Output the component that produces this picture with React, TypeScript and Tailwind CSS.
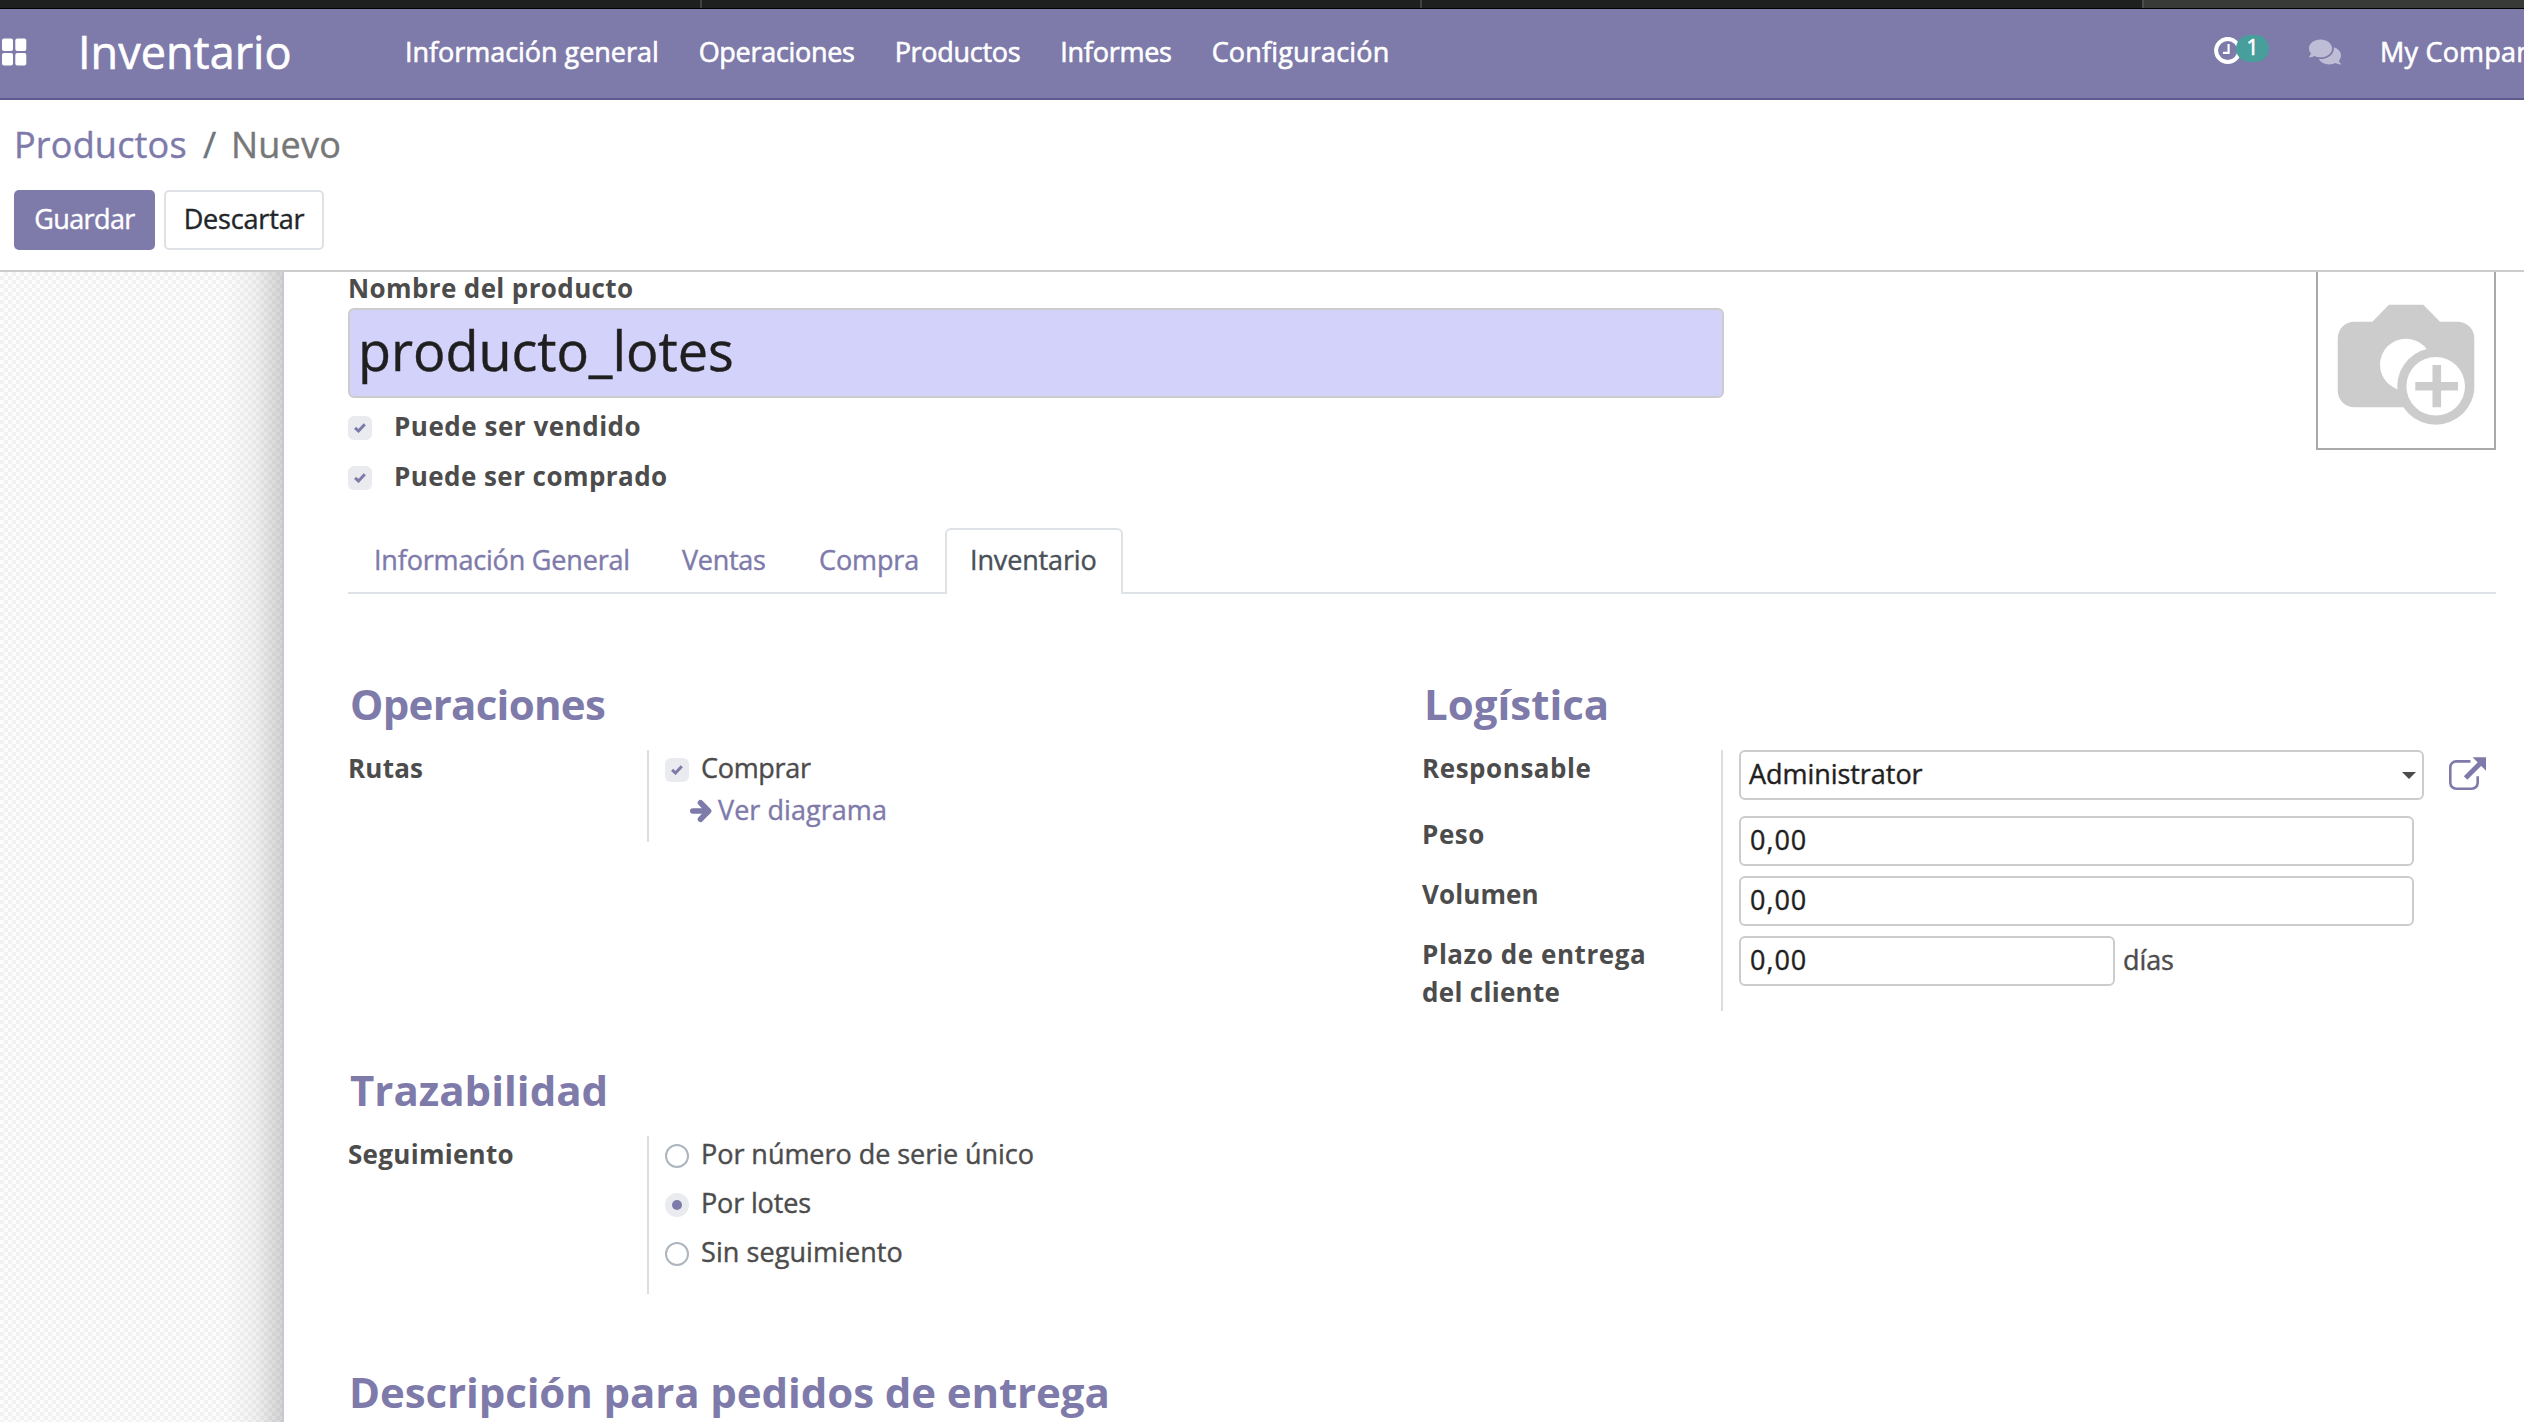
import React from 'react';
import { FaComments } from 'react-icons/fa';

function Checkbox() {
  return (
    <span className="flex size-6 shrink-0 items-center justify-center rounded-[6px] bg-[#e9ebef]">
      <svg width="12" height="10" viewBox="0 0 12 10" fill="none" stroke="#7e7aaa" strokeWidth="3">
        <path d="M1.1 4.9 4.5 8 10.8 1.3" />
      </svg>
    </span>
  );
}

function Radio({ checked = false }: { checked?: boolean }) {
  return checked ? (
    <span className="mt-2 flex size-6 shrink-0 items-center justify-center rounded-full bg-[#e9ebef]">
      <span className="size-[10px] rounded-full bg-[#7e7aaa]" />
    </span>
  ) : (
    <span className="mt-2 size-6 shrink-0 rounded-full border-2 border-[#adb5bd] bg-white" />
  );
}

function Heading({ children, className = '' }: { children: React.ReactNode; className?: string }) {
  return (
    <h2 className={`text-[42px] leading-[44px] font-bold whitespace-nowrap text-[#7e7aaa] [-webkit-text-stroke:0] ${className}`}>
      {children}
    </h2>
  );
}

function Label({ children, className = '' }: { children: React.ReactNode; className?: string }) {
  return (
    <div className={`text-[26px] font-bold whitespace-nowrap text-[#4c4c4c] [-webkit-text-stroke:0] ${className}`}>{children}</div>
  );
}

function Field({ value, className = '' }: { value: string; className?: string }) {
  return (
    <div className={`flex h-[50px] items-center rounded-[6px] border-2 border-[#ccc] bg-white pb-px pl-[9px] text-[#1f1f1f] ${className}`}>
      {value}
    </div>
  );
}

function TopBar() {
  return (
    <header>
      <div className="flex h-2 bg-[#1e201f]">
        <div className="w-[702px] border-r-2 border-[#3f4241]" />
        <div className="w-[720px] border-r-2 border-[#3f4241]" />
        <div className="w-[722px] border-r-2 border-[#4a4c4a]" />
        <div className="flex-1 bg-[#383a38]" />
      </div>
      <div className="flex h-[92px] items-center overflow-hidden border-t border-b-2 border-t-black border-b-[#5f5b8f] bg-[#7e7aaa] pb-[3px] text-[27px] leading-9 whitespace-nowrap text-white [-webkit-text-stroke:0.6px]">
        <svg width="25" height="28" viewBox="0 0 25 28" fill="white" className="ml-0.5 shrink-0">
          <rect x="0" y="0.5" width="11" height="12.5" rx="2" />
          <rect x="13.3" y="0.5" width="11" height="12.5" rx="2" />
          <rect x="0" y="15" width="11" height="12.5" rx="2" />
          <rect x="13.3" y="15" width="11" height="12.5" rx="2" />
        </svg>
        <div className="ml-[51px] w-[327px] shrink-0 text-[45px] tracking-[0.02px]">Inventario</div>
        <nav className="flex gap-10">
          <span className="tracking-[-0.04px]">Información general</span>
          <span className="tracking-[-0.3px]">Operaciones</span>
          <span className="tracking-[-0.3px]">Productos</span>
          <span className="tracking-[-0.26px]">Informes</span>
          <span className="tracking-[0.18px]">Configuración</span>
        </nav>
        <div className="ml-auto flex w-[310px] shrink-0 items-center">
          <svg width="28" height="28" viewBox="0 0 28 28" fill="none" stroke="white" className="relative -top-px shrink-0">
            <circle cx="13.7" cy="13.5" r="11.6" strokeWidth="4" />
            <path d="M14.6 7v8.8H9" strokeWidth="2.2" />
          </svg>
          <span className="relative -top-[4px] -ml-[6px] flex h-[27px] w-[33px] shrink-0 items-center justify-center rounded-full bg-[#489e9b] pb-[3px] text-[21px]">
            1
          </span>
          <FaComments className="ml-[40px] size-8 shrink-0 text-[#bfbdd6]" />
          <span className="ml-[39px] shrink-0 tracking-[0.2px]">My Company</span>
        </div>
      </div>
    </header>
  );
}

function ControlPanel() {
  return (
    <div className="h-[172px] border-b-2 border-[#ccc] bg-white px-[14px] pt-[23px]">
      <div className="flex text-[36px] leading-[44px] tracking-[0.2px]">
        <span className="w-[189px] text-[#7e7aaa]">Productos</span>
        <span className="w-[28px] text-[#6c757d]">/</span>
        <span className="tracking-[0.2px] text-[#777]">Nuevo</span>
      </div>
      <div className="mt-[23px] flex gap-[9px] text-[27px]">
        <div className="flex h-[60px] w-[141px] items-center justify-center rounded-[5px] bg-[#7e7aaa] pb-px tracking-[-0.6px] text-white">
          Guardar
        </div>
        <div className="flex h-[60px] w-[160px] items-center justify-center rounded-[5px] border-2 border-[#dee2e6] pb-px tracking-[-0.18px] text-[#212529]">
          Descartar
        </div>
      </div>
    </div>
  );
}

function ProductImage() {
  return (
    <div className="h-[178px] w-[180px] border-x-2 border-b-2 border-[#a9a9a9]">
      <svg width="176" height="176" viewBox="2 0 176 176">
        <path
          d="M38.4 49.7H56.3L73 32.7H107.3L124 49.7H141.6A16.7 16.7 0 0 1 158.3 66.4V118A38.6 38.6 0 0 1 88.3 135.3H38.4A16.7 16.7 0 0 1 21.7 118.6V66.4A16.7 16.7 0 0 1 38.4 49.7Z"
          fill="#ccc"
        />
        <circle cx="90" cy="92.7" r="26" fill="white" />
        <circle cx="119.7" cy="114.3" r="38.4" fill="#ccc" />
        <circle cx="119.7" cy="114.3" r="29.3" fill="white" />
        <path d="M120.8 93v42.3M99.3 114.2H142" stroke="#ccc" strokeWidth="8.6" />
      </svg>
    </div>
  );
}

function Tabs() {
  return (
    <div className="mt-[38px] flex h-[66px] border-b-2 border-[#dee2e6] text-[27px] leading-[64px] text-[#7e7aaa]">
      <span className="ml-[26px] w-[308px] tracking-[-0.18px]">Información General</span>
      <span className="w-[137px] tracking-[-0.3px]">Ventas</span>
      <span className="w-[126px] tracking-[-0.1px]">Compra</span>
      <span className="h-[66px] w-[178px] rounded-t-[6px] border-2 border-b-0 border-[#dee2e6] bg-white pl-[23px] leading-[60px] tracking-[-0.15px] text-[#495057]">
        Inventario
      </span>
    </div>
  );
}

function Operations() {
  return (
    <section>
      <Heading className="ml-[2px] tracking-[-0.72px]">Operaciones</Heading>
      <div className="mt-6 flex h-[92px]">
        <Label className="w-[299px] leading-9 tracking-[0.2px]">Rutas</Label>
        <div className="border-l-2 border-[#ddd] pl-4">
          <div className="flex items-center gap-3 leading-9">
            <span className="relative top-[2px]">
              <Checkbox />
            </span>
            <span className="tracking-[-0.3px]">Comprar</span>
          </div>
          <div className="mt-[6px] ml-[25px] flex items-center gap-[6px] leading-9 text-[#7e7aaa]">
            <svg
              width="22"
              height="24"
              viewBox="0 0 22 24"
              fill="none"
              stroke="currentColor"
              strokeWidth="5.6"
              strokeLinecap="round"
              strokeLinejoin="round"
              className="relative top-px"
            >
              <path d="M2.8 12H18M10.5 3.7 18.6 12 10.5 20.3" />
            </svg>
            <span className="tracking-[0.05px]">Ver diagrama</span>
          </div>
        </div>
      </div>
    </section>
  );
}

function Logistics() {
  return (
    <section>
      <Heading className="ml-[2px]">Logística</Heading>
      <div className="mt-6 flex">
        <div className="w-[299px] tracking-[0.55px]">
          <Label className="h-[66px] leading-9">Responsable</Label>
          <Label className="h-[60px] leading-9">Peso</Label>
          <Label className="h-[60px] leading-9 tracking-[0.1px]">Volumen</Label>
          <Label className="-mt-px leading-[38px]">
            Plazo de entrega
            <br />
            <span className="tracking-[0.31px]">del cliente</span>
          </Label>
        </div>
        <div className="h-[261px] flex-1 border-l-2 border-[#ddd] pl-4">
          <div className="flex h-[66px]">
            <div className="flex h-[50px] w-[685px] items-center justify-between rounded-[6px] border-2 border-[#ccc] pr-[6px] pb-px pl-[8px] tracking-[-0.05px] text-[#1f1f1f]">
              Administrator
              <svg width="14" height="7" viewBox="0 0 14 7" fill="#4c4c4c" className="relative top-px">
                <path d="M0 0H14L7 7Z" />
              </svg>
            </div>
            <svg width="40" height="36" viewBox="0 0 40 36" className="mt-[6px] ml-[24px]" fill="none" stroke="#7e7aaa">
              <path
                d="M22.5 5.4H8.2A5.9 5.9 0 0 0 2.3 11.3V26.8A5.9 5.9 0 0 0 8.2 32.7H23.8A5.9 5.9 0 0 0 29.7 26.8V20.3"
                strokeWidth="2.6"
              />
              <path d="M17.6 22 33 6.6" strokeWidth="5" />
              <path d="M24.6 1.3H38V14.7Z" fill="#7e7aaa" stroke="none" />
            </svg>
          </div>
          <Field value="0,00" className="w-[675px] tracking-[1px]" />
          <Field value="0,00" className="mt-[10px] w-[675px] tracking-[1px]" />
          <div className="mt-[10px] flex">
            <Field value="0,00" className="w-[376px] tracking-[1px]" />
            <span className="ml-2 leading-[48px] tracking-[-0.1px]">días</span>
          </div>
        </div>
      </div>
    </section>
  );
}

function Traceability() {
  return (
    <section className="mt-[57px]">
      <Heading className="ml-[2px]">Trazabilidad</Heading>
      <div className="mt-6 flex h-[158px]">
        <Label className="w-[299px] leading-9 tracking-[0.3px]">Seguimiento</Label>
        <div className="border-l-2 border-[#ddd] pl-4 leading-9">
          <div className="flex h-[49px] gap-3">
            <Radio />
            <span className="tracking-[-0.04px]">Por número de serie único</span>
          </div>
          <div className="flex h-[49px] gap-3">
            <Radio checked />
            <span className="tracking-[-0.15px]">Por lotes</span>
          </div>
          <div className="flex h-[49px] gap-3">
            <Radio />
            <span className="tracking-[0.08px]">Sin seguimiento</span>
          </div>
        </div>
      </div>
    </section>
  );
}

export default function App() {
  return (
    <div className="flex h-[1422px] w-[2524px] flex-col overflow-hidden bg-white font-['Open_Sans','Noto_Sans',sans-serif] text-[27px] text-[#4c4c4c] [-webkit-text-stroke:0.4px]">
      <TopBar />
      <ControlPanel />
      <main className="flex min-h-0 flex-1 overflow-hidden">
        <div className="w-[282px] shrink-0 bg-[repeating-conic-gradient(#f2f2f2_0_25%,#fcfcfc_0_50%)] bg-size-[8px_8px]">
          <div className="ml-auto h-full w-[56px] bg-linear-to-r from-transparent via-black/4 to-black/16" />
        </div>
        <div className="min-w-0 flex-1 border-l-2 border-[#c8c8d3] bg-white pr-7 pl-16">
          <div className="flex justify-between">
            <div className="w-[1376px]">
              <Label className="leading-8 tracking-[0.38px]">Nombre del producto</Label>
              <div className="mt-1 flex h-[90px] items-center rounded-[6px] border-2 border-[#ccc] bg-[#d3d2fa] pb-[7px] pl-[8px] text-[54px] leading-[70px] tracking-[-0.06px] text-[#1f1f1f]">
                producto_lotes
              </div>
              <div className="mt-[18px] flex h-6 items-center gap-[22px]">
                <Checkbox />
                <Label className="-mt-1 leading-7 tracking-[0.52px]">Puede ser vendido</Label>
              </div>
              <div className="mt-[26px] flex h-6 items-center gap-[22px]">
                <Checkbox />
                <Label className="-mt-1 leading-7 tracking-[0.44px]">Puede ser comprado</Label>
              </div>
            </div>
            <ProductImage />
          </div>
          <Tabs />
          <div className="mt-[88px] grid grid-cols-[1074px_1fr]">
            <Operations />
            <Logistics />
          </div>
          <Traceability />
          <Heading className="mt-[76px] ml-px tracking-[-0.1px]">Descripción para pedidos de entrega</Heading>
        </div>
      </main>
    </div>
  );
}
